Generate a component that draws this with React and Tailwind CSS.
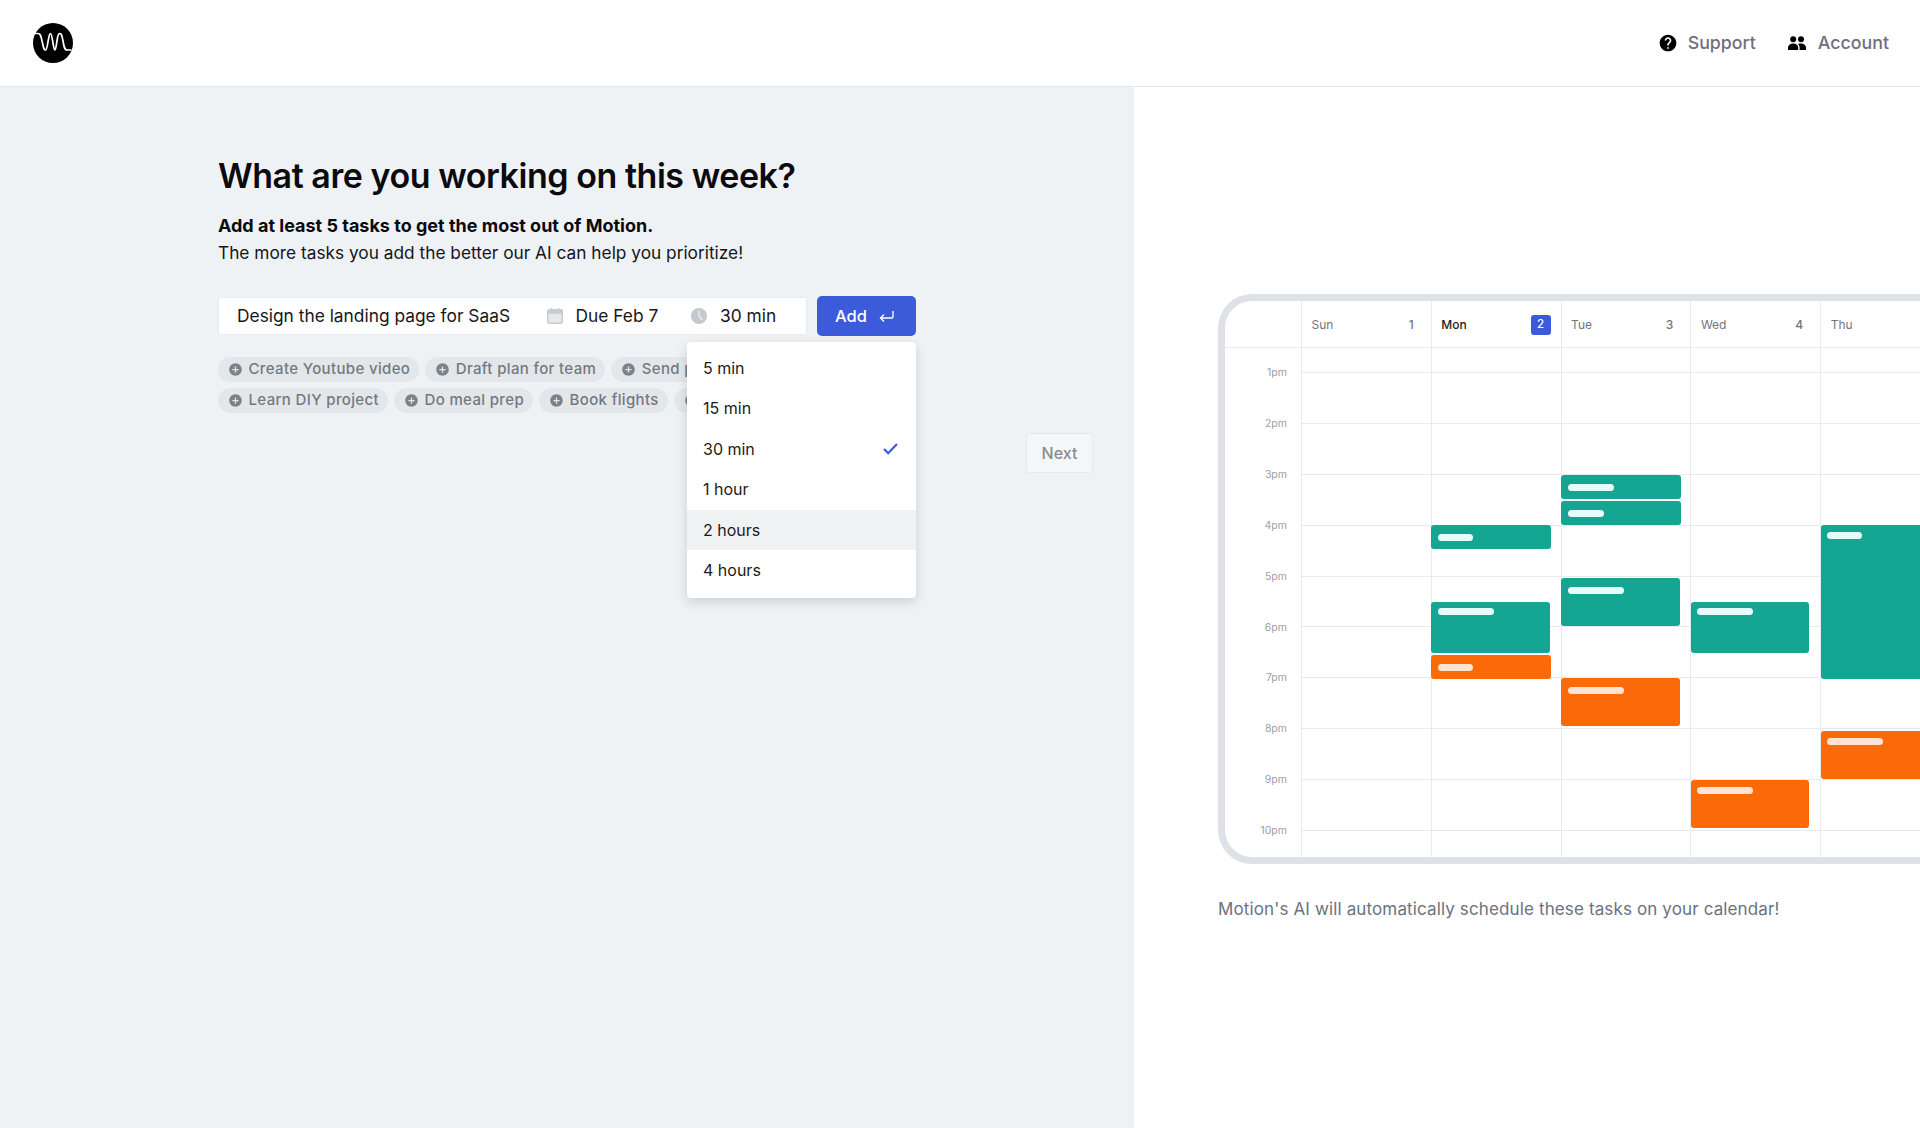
import React from "react";
import { MdHelp, MdAddCircle } from "react-icons/md";

const hours = ["1pm","2pm","3pm","4pm","5pm","6pm","7pm","8pm","9pm","10pm"];
const TEAL = "bg-[#14a692]";
const ORANGE = "bg-[#fb6a09]";
// top, height, width, bar width, bar offset, colour
const days = [
  { d: "Sun", n: "1", ev: [] },
  { d: "Mon", n: "2", active: true, ev: [
    [177, 24, 119.5, 35, 8.5, TEAL], [253.5, 51, 118.5, 56, 6.5, TEAL], [307, 24, 119.5, 35, 9, ORANGE],
  ]},
  { d: "Tue", n: "3", ev: [
    [127, 24, 119.5, 46, 9, TEAL], [153, 24, 119.5, 36, 9, TEAL], [230, 48, 118.5, 56, 9, TEAL], [330, 48, 118.5, 56, 9, ORANGE],
  ]},
  { d: "Wed", n: "4", ev: [
    [253.5, 51, 118.5, 56, 6.5, TEAL], [432, 48, 118.5, 56, 7, ORANGE],
  ]},
  { d: "Thu", n: "", ev: [
    [177, 154, 125, 35, 7, TEAL], [383, 48, 125, 56, 7, ORANGE],
  ]},
];

function Event({ e }) {
  const [top, h, w, bar, off, color] = e;
  return (
    <div className={`absolute left-[-0.6px] rounded-[3px] ${color} pl-[6.5px]`} style={{ top, height: h, width: w, paddingTop: off }}>
      <div className={`h-[7px] rounded-full ${color === TEAL ? "bg-[#e6fbfa]" : "bg-[#ffe3d3]"}`} style={{ width: bar }} />
    </div>
  );
}

function Logo() {
  return (
    <svg width="40" height="40" viewBox="0 0 40 40">
      <circle cx="20" cy="20" r="20" fill="#000" />
      <path d="M1.5 10.5 H5 C8 10.5 8 14 9.5 20 C10.5 25 11 27 12.5 27 C14 27 14.5 21 15.5 16 C16.2 12 16.5 10.5 17.5 10.5 C18.5 10.5 19 14 20 20 C20.8 25 21 27 22 27 C23 27 23.5 20 24.5 15 C25 11.5 26 10.5 27 10.5 C28.5 10.5 29 13 30 18 C30.8 23 31.5 27 34 27 H38.5" fill="none" stroke="#fff" strokeWidth="1.7" />
    </svg>
  );
}

function People() {
  return (
    <svg width="18" height="14" viewBox="0 0 18 14" fill="#000">
      <circle cx="5.2" cy="3.2" r="3" />
      <circle cx="13" cy="3.2" r="3" />
      <path d="M0 14 V11.5 C0 9 2.6 7.4 5.2 7.4 C7.8 7.4 10.2 9 10.2 11.5 V14 Z" />
      <path d="M11.6 14 V11.5 C11.6 9.9 11 8.7 10 7.9 C11 7.5 12 7.4 13 7.4 C15.5 7.4 18 9 18 11.5 V14 Z" />
    </svg>
  );
}

function CalendarIcon() {
  return (
    <svg width="16" height="16" viewBox="0 0 16 16" className="shrink-0">
      <rect x="0.75" y="1.75" width="14.5" height="13.5" rx="1.5" fill="#e6e9eb" stroke="#c7ccd0" strokeWidth="1.5" />
      <rect x="0.75" y="1.75" width="14.5" height="4" fill="#c7ccd0" />
      <rect x="3.5" y="0" width="1.5" height="3" fill="#c7ccd0" />
      <rect x="11" y="0" width="1.5" height="3" fill="#c7ccd0" />
    </svg>
  );
}

function ClockIcon() {
  return (
    <svg width="16" height="16" viewBox="0 0 16 16" className="shrink-0">
      <circle cx="8" cy="8" r="8" fill="#c3c8cc" />
      <path d="M8 2.5 V8 L11.3 12" fill="none" stroke="#e9ecee" strokeWidth="1.5" />
    </svg>
  );
}

function Chip({ t }) {
  return (
    <div className="flex h-[25px] shrink-0 items-center gap-[5.5px] rounded-full bg-[#e4e7ea] pl-[10px] pr-[9px] text-[15px] font-medium tracking-[0.35px] text-[#737980]">
      <MdAddCircle className="h-[15px] w-[15px] text-[#7a838a]" />
      <span>{t}</span>
    </div>
  );
}

export default function App() {
  return (
    <div className="flex h-[1128px] w-[1920px] flex-col overflow-hidden bg-white font-['Inter',sans-serif]">
      <header className="flex h-[87px] shrink-0 items-center justify-between border-b border-[#e6e8ea] bg-white pl-[33px] pr-[31px]">
        <Logo />
        <div className="flex items-center gap-[32px] text-[17.8px] font-medium text-[#6f6f7e]">
          <div className="flex items-center gap-[10px]">
            <MdHelp className="h-[20px] w-[20px] text-black" />
            <span>Support</span>
          </div>
          <div className="flex items-center gap-[12px]">
            <People />
            <span>Account</span>
          </div>
        </div>
      </header>
      <div className="flex min-h-0 flex-1">
        <div className="relative w-[1134px] shrink-0 bg-[#eff2f5] pl-[218px] pt-[67px]">
          <h1 className="text-[34px] font-semibold leading-[44px] tracking-[-0.45px] text-[#0b0b0f]">What are you working on this week?</h1>
          <p className="mt-[13.5px] text-[18px] font-bold leading-[27px] text-[#0b0b0f]">Add at least 5 tasks to get the most out of Motion.</p>
          <p className="text-[17.3px] leading-[27px] text-[#15151a]">The more tasks you add the better our AI can help you prioritize!</p>

          <div className="mt-[30.5px] flex w-[698px] items-center">
            <div className="flex h-[38px] w-[589px] items-center rounded-[2px] border border-[#e9ecef] bg-white pl-[18px] text-[17.35px] text-[#17171c]">
              <span className="w-[310px]">Design the landing page for SaaS</span>
              <CalendarIcon />
              <span className="ml-[12.5px] w-[115.5px]">Due Feb 7</span>
              <ClockIcon />
              <span className="ml-[13px]">30 min</span>
            </div>
            <button className="ml-[10px] flex h-[40px] w-[99px] items-center gap-[12px] rounded-[5px] bg-[#3b5bdb] pl-[18px] text-[16.5px] font-medium text-white">
              Add
              <svg width="15" height="13" viewBox="0 0 15 13" fill="none" stroke="#fff" strokeWidth="1.4"><path d="M14 1 V6.5 C14 7.5 13.5 8 12.5 8 H1.5 M5 4.5 L1.5 8 L5 11.5" /></svg>
            </button>
          </div>

          <div className="mt-[21px] flex w-[470px] flex-col gap-[5.7px] overflow-hidden">
            <div className="flex gap-[6px]">
              <Chip t="Create Youtube video" />
              <Chip t="Draft plan for team" />
              <Chip t="Send proposal" />
            </div>
            <div className="flex gap-[6px]">
              <Chip t="Learn DIY project" />
              <Chip t="Do meal prep" />
              <Chip t="Book flights" />
              <Chip t="Read" />
            </div>
          </div>

          <div className="absolute left-[687px] top-[255px] w-[229px] rounded-[4px] bg-white pb-[7px] pt-[5.5px] text-[16px] text-[#1b1b20] shadow-[0_4px_12px_rgba(0,0,0,0.14)]">
            {["5 min","15 min","30 min","1 hour","2 hours","4 hours"].map((t) => (
              <div key={t} className={`flex h-[40.5px] items-center justify-between pl-[16px] pr-[18px] ${t === "2 hours" ? "bg-[#eff1f3]" : ""}`}>
                <span>{t}</span>
                {t === "30 min" && (
                  <svg width="15" height="12" viewBox="0 0 15 12" fill="none" stroke="#3b5bdb" strokeWidth="2.2"><path d="M1 6 L5.2 10.2 L14 1" /></svg>
                )}
              </div>
            ))}
          </div>

          <button className="absolute left-[1026px] top-[346px] h-[40px] w-[67px] rounded-[3px] border border-[#e6e9ec] bg-[#f5f6f8] text-[16px] font-medium text-[#868d94]">Next</button>
        </div>

        <div className="min-w-0 flex-1 overflow-hidden pl-[84px] pt-[207px]">
          <div className="flex h-[570px] w-[900px] overflow-hidden rounded-l-[34px] border-y-[7px] border-l-[7px] border-[#dee2e6]">
            <div className="relative h-full w-[77px] shrink-0 border-r border-[#e8ebee]">
              <div className="h-[47px] border-b border-[#e8ebee]" />
              {hours.map((h, i) => (
                <div key={h} className="absolute right-[14px] text-right text-[10.5px] leading-[14px] text-[#9a9fa6]" style={{ top: 65 + i * 50.9 }}>{h}</div>
              ))}
            </div>
            {days.map((day) => (
              <div key={day.d} className="flex h-full w-[129.8px] shrink-0 flex-col border-r border-[#e8ebee]">
                <div className="flex h-[47px] shrink-0 items-center justify-between border-b border-[#e8ebee] pl-[9.5px] pr-[17px] pt-[1.5px] text-[12px]">
                  <span className={day.active ? "font-medium text-[#1b1b20]" : "text-[#70757c]"}>{day.d}</span>
                  {day.active ? (
                    <span className="-mr-[7px] flex h-[20px] w-[20px] items-center justify-center rounded-[3px] bg-[#3b5bdb] text-[11.5px] font-medium text-white">{day.n}</span>
                  ) : (
                    <span className="font-medium text-[#70757c]">{day.n}</span>
                  )}
                </div>
                <div className="relative flex-1">
                  <div className="h-[25px] border-b border-[#e8ebee]" />
                  {hours.slice(1).map((h) => (
                    <div key={h} className="h-[50.9px] border-b border-[#e8ebee]" />
                  ))}
                  {day.ev.map((e, i) => <Event key={i} e={e} />)}
                </div>
              </div>
            ))}
          </div>
          <p className="mt-[33px] text-[17px] leading-[24px] tracking-[0.13px] text-[#6b7280]">Motion's AI will automatically schedule these tasks on your calendar!</p>
        </div>
      </div>
    </div>
  );
}
